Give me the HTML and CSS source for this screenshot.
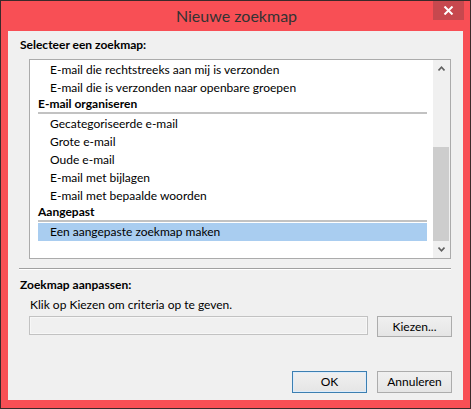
FILE: index.html
```html
<!DOCTYPE html>
<html lang="nl">
<head>
<meta charset="utf-8">
<title>Nieuwe zoekmap</title>
<link rel="stylesheet" href="styles.css">
</head>
<body>
<div class="window">
  <div class="titlebar">
    <span class="title">Nieuwe zoekmap</span>
    <div class="close">
      <svg width="11" height="9" viewBox="0 0 11 9"><path d="M1.5 0.5 L9.5 8.5 M9.5 0.5 L1.5 8.5" stroke="#fff" stroke-width="2" fill="none"/></svg>
    </div>
  </div>
  <div class="client">
    <div class="label">Selecteer een zoekmap:</div>
    <div class="listbox">
      <div class="list-items">
        <div class="item">E-mail die rechtstreeks aan mij is verzonden</div>
        <div class="item">E-mail die is verzonden naar openbare groepen</div>
        <div class="header">E-mail organiseren</div>
        <div class="item">Gecategoriseerde e-mail</div>
        <div class="item">Grote e-mail</div>
        <div class="item">Oude e-mail</div>
        <div class="item">E-mail met bijlagen</div>
        <div class="item">E-mail met bepaalde woorden</div>
        <div class="header">Aangepast</div>
        <div class="item selected">Een aangepaste zoekmap maken</div>
      </div>
      <div class="scrollbar">
        <div class="arrow">
          <svg width="7" height="5" viewBox="0 0 7 5"><path d="M0.5 4.5 L3.5 1.2 L6.5 4.5" stroke="#606060" stroke-width="1.6" fill="none"/></svg>
        </div>
        <div class="track"><div class="thumb"></div></div>
        <div class="arrow">
          <svg width="7" height="5" viewBox="0 0 7 5"><path d="M0.5 0.5 L3.5 3.8 L6.5 0.5" stroke="#606060" stroke-width="1.6" fill="none"/></svg>
        </div>
      </div>
    </div>
    <div class="separator"></div>
    <div class="label">Zoekmap aanpassen:</div>
    <div class="hint">Klik op Kiezen om criteria op te geven.</div>
    <div class="criteria-row">
      <div class="textbox"></div>
      <button class="btn">Kiezen...</button>
    </div>
    <div class="footer">
      <button class="btn btn-default">OK</button>
      <button class="btn">Annuleren</button>
    </div>
  </div>
</div>
</body>
</html>
```

FILE: styles.css
```css
* { box-sizing: border-box; }
html, body { margin: 0; padding: 0; }
body {
  font-family: Lato, "Noto Sans", sans-serif;
  font-size: 12px;
  color: #000;
  background: #fff;
}
.window {
  width: 471px;
  height: 409px;
  border: 1px solid #3a2a2a;
  background: #f84f55;
  display: flex;
  flex-direction: column;
}
.titlebar {
  height: 30px;
  display: grid;
  grid-template-columns: 1fr auto 1fr;
  align-items: start;
}
.title {
  grid-column: 2;
  font-size: 16px;
  line-height: 30px;
  color: #333;
  padding-left: 2px;
}
.close {
  grid-column: 3;
  justify-self: end;
  margin-right: 6px;
  width: 31px;
  height: 19px;
  background: #c7484e;
  display: flex;
  align-items: center;
  justify-content: center;
}
.client {
  margin: 0 7px 0 7px;
  height: 369px;
  background: #f0f0f0;
  display: flex;
  flex-direction: column;
  padding-top: 6px;
  padding-bottom: 7px;
}
.label {
  font-weight: bold;
  line-height: 16px;
  padding-left: 12px;
}
.listbox {
  margin: 6px 12px 0 21px;
  height: 200px;
  border: 1px solid #ababab;
  background: #fff;
  display: flex;
}
.list-items {
  flex: 1;
  padding: 1px 6px 0 8px;
}
.item {
  height: 18px;
  line-height: 18px;
  padding-left: 12px;
  white-space: nowrap;
}
.item.selected { background: #a9cdf0; }
.header {
  font-weight: bold;
  line-height: 13px;
  padding-bottom: 2px;
  border-bottom: 2px solid #c2c2c2;
  margin-bottom: 1px;
}
.scrollbar {
  width: 17px;
  background: #f0f0f0;
  display: flex;
  flex-direction: column;
}
.arrow {
  height: 17px;
  display: flex;
  align-items: center;
  justify-content: center;
}
.track { flex: 1; }
.thumb {
  margin: 70px 1px 0 0;
  height: 94px;
  background: #cdcdcd;
}
.separator {
  margin: 9px 12px 0 11px;
  border-top: 1px solid #a0a0a0;
  border-bottom: 1px solid #fff;
}
.separator + .label { margin-top: 7px; }
.hint {
  margin-top: 4px;
  padding-left: 22px;
  line-height: 16px;
}
.criteria-row {
  margin: 3px 11px 0 21px;
  display: flex;
  gap: 9px;
  align-items: flex-start;
}
.textbox {
  flex: 1;
  height: 19px;
  border: 1px solid #c2c2c2;
  background: #f0f0f0;
  box-shadow: inset 0 0 0 1px #f7f7f7;
}
.btn {
  width: 75px;
  height: 21px;
  border: 1px solid #acacac;
  background: linear-gradient(#f0f0f0, #e5e5e5);
  font-family: Lato, "Noto Sans", sans-serif;
  font-size: 12px;
  color: #000;
  padding: 0;
  line-height: 18px;
}
.footer {
  margin-top: auto;
  display: flex;
  justify-content: flex-end;
  gap: 10px;
  padding-right: 11px;
}
.footer .btn { height: 22px; }
.btn-default {
  border-color: #3c7fb1;
  box-shadow: inset 0 0 0 1px #dcecfc;
}
```
